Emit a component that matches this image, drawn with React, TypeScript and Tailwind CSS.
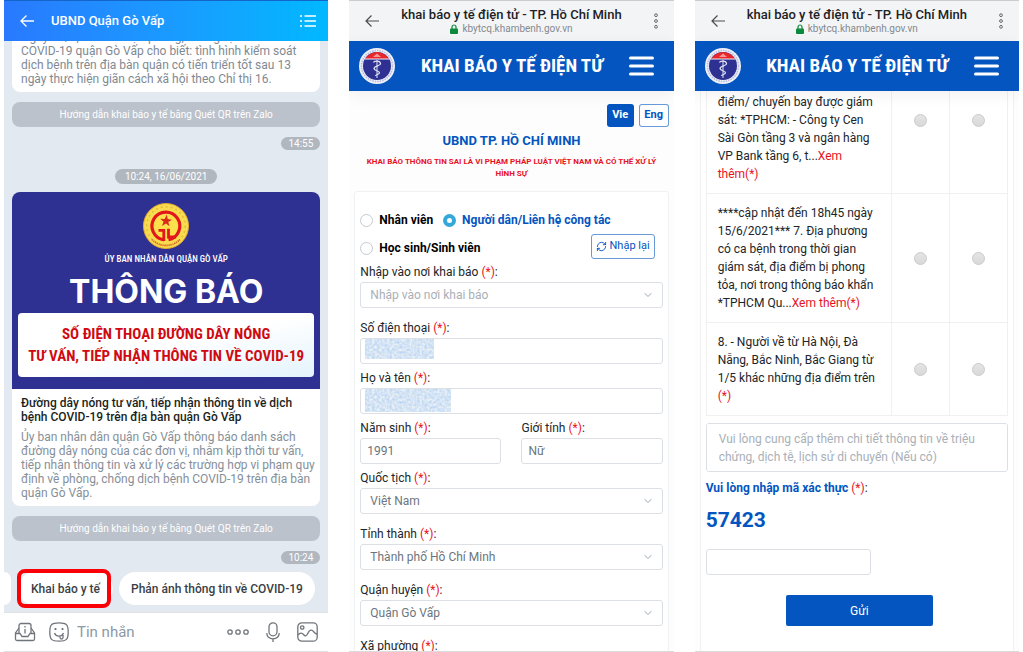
import { useId } from 'react'
import type { ReactNode } from 'react'
import { ChevronDown, RefreshCw } from 'lucide-react'

const condensed = "font-['Roboto_Condensed','Roboto',sans-serif]"

function Required() {
  return <span className="text-[#e8121d]">(*)</span>
}

function Emblem() {
  return (
    <svg viewBox="0 0 46 46" className="size-[46px]" aria-hidden="true">
      <circle cx="23" cy="23" r="22.5" fill="#f8dc50" stroke="#e3ab2f" />
      <circle cx="23" cy="23" r="19.3" fill="none" stroke="#e6b93a" strokeWidth="1.5" strokeDasharray="2 3" />
      <path d="M9 36.5A19.3 19.3 0 0 0 37 36.5" fill="none" stroke="#d8652b" strokeWidth="1.8" strokeDasharray="1.2 .8" />
      <circle cx="23" cy="23" r="16" fill="#fbe04c" />
      <path d="M20.8 36.8A13.9 13.9 0 1 1 25.5 36.7" fill="none" stroke="#e3161c" strokeWidth="3.2" />
      <path d="M15.5 27.3H20.8V38M25.5 25.8V34H33" fill="none" stroke="#e3161c" strokeWidth="2.8" />
      <path
        d="M23.8 11.5L24.7 16L29 16.8L25.3 19L26.5 23.3L23 20.5L19 23L20.6 18.7L17.2 15.8L21.7 15.9Z"
        fill="#d9291c"
      />
    </svg>
  )
}

function HealthLogo() {
  return (
    <svg viewBox="0 0 36 36" className="size-9 shrink-0" aria-hidden="true">
      <circle cx="18" cy="18" r="18" fill="#eef0f8" />
      <circle cx="18" cy="18" r="15.5" fill="none" stroke="#b7bcdd" strokeWidth="1.6" strokeDasharray="1.5 1" />
      <circle cx="18" cy="18" r="14" fill="#2e3192" />
      <path d="M5.9 11A14 14 0 0 1 30.1 11Z" fill="#e8262c" />
      <path d="M14 9L18 5.5L22 9Z" fill="#f39a92" />
      <path d="M5.8 11H30.2" stroke="#eef0f8" strokeWidth="1" />
      <path d="M18 12V30" stroke="#dfe1f2" strokeWidth="1" />
      <path
        d="M14.5 14.5C15 12.5 21 12.5 21.5 15.5C22 18 15 17.5 15 20.5C15 23 20.500 22.500 20.500 24.800C20.500 26.500 16.500 26.500 16.500 28"
        fill="none"
        stroke="#dfe1f2"
        strokeWidth="1.3"
      />
    </svg>
  )
}

// Obscured personal data shown on top of an input
function Redacted({ className }: { className: string }) {
  const id = useId()
  return (
    <svg className={`pointer-events-none absolute top-px left-[5px] ${className}`} aria-hidden="true">
      <filter id={id} x="0" y="0" width="100%" height="100%" colorInterpolationFilters="sRGB">
        <feTurbulence type="fractalNoise" baseFrequency="0.4" numOctaves="2" seed="4" />
        <feColorMatrix values="0.35 0 0 0 0.66  0.2 0.05 0 0 0.77  0 0 0.1 0 0.91  0 0 0 0 1" />
      </filter>
      <rect width="100%" height="100%" fill="#cfe2f6" filter={`url(#${id})`} />
    </svg>
  )
}

function HelpBar() {
  return (
    <button className="mt-[10px] h-[25px] w-full shrink-0 rounded-lg bg-[#bbc2cb] text-[10px] text-white">
      Hướng dẫn khai báo y tế bằng Quét QR trên Zalo
    </button>
  )
}

function TimeTag({ children }: { children: ReactNode }) {
  return (
    <time className="mt-[10px] h-[13px] shrink-0 self-end rounded-full bg-[#b1b7bf] px-[7px] text-[10px] leading-[13px] text-white">
      {children}
    </time>
  )
}

function Composer() {
  return (
    <footer className="flex h-10 shrink-0 items-center border-t border-b border-[#dfe1e5] bg-white px-[10px] text-[#70757c]">
      <button aria-label="Menu">
        <svg viewBox="0 0 22 20" className="h-5 w-[22px]" fill="none" stroke="currentColor" strokeWidth="1.3">
          <path d="M5 11V3.5a2 2 0 0 1 2-2h8a2 2 0 0 1 2 2V11" />
          <path d="M5 6L1.5 11v6a1.5 1.5 0 0 0 1.5 1.5h16a1.5 1.5 0 0 0 1.5-1.5v-6L17 6" />
          <path d="M1.5 11.5H6l2 3h6l2-3h4.5M11 7v4.5M11 4v1.5" />
        </svg>
      </button>
      <button aria-label="Biểu cảm" className="ml-[13px]">
        <svg viewBox="0 0 20 20" className="size-5" fill="none" stroke="currentColor" strokeWidth="1.3">
          <path d="M10 .8c7.5 0 9.2 1.7 9.2 9.2s-1.7 9.2-9.2 9.2S.8 17.5.8 10 2.5.8 10 .8Z" />
          <path d="M5.5 11c1.5 4.2 7.5 4.2 9 0M11 13.8v1.7a1.5 1.5 0 0 0 3 0v-2.5" />
          <path d="M6.5 6v2M13.5 6v2" strokeWidth="1.8" />
        </svg>
      </button>
      <input
        aria-label="Tin nhắn"
        placeholder="Tin nhắn"
        className="ml-2 min-w-0 flex-1 text-[15px] outline-none placeholder:text-[#8d99a6]"
      />
      <button aria-label="Thêm">
        <svg viewBox="0 0 22 6" className="h-[6px] w-[22px]" fill="none" stroke="currentColor" strokeWidth="1.3">
          <circle cx="3" cy="3" r="2.2" />
          <circle cx="11" cy="3" r="2.2" />
          <circle cx="19" cy="3" r="2.2" />
        </svg>
      </button>
      <button aria-label="Ghi âm" className="ml-[17px]">
        <svg viewBox="0 0 14 20" className="h-5 w-[14px]" fill="none" stroke="currentColor" strokeWidth="1.3">
          <rect x="3" y=".8" width="8" height="13" rx="4" />
          <path d="M.8 11c0 3.5 2.500 5.800 6.200 5.800s6.200-2.300 6.200-5.800M7 17v3" />
        </svg>
      </button>
      <button aria-label="Hình ảnh" className="ml-[17px]">
        <svg viewBox="0 0 21 20" className="h-5 w-[21px]" fill="none" stroke="currentColor" strokeWidth="1.3">
          <rect x=".8" y=".8" width="19.4" height="18.4" rx="4" />
          <circle cx="5.2" cy="5.5" r="1.7" />
          <path d="M1 13c2-2.5 4-2.5 5.5-.5s3 2 4.500-1.500 4-3.500 5.500-1.500 2 2.500 3.500 2.500" />
        </svg>
      </button>
    </footer>
  )
}

function ChatPanel() {
  return (
    <section className="flex min-w-0 flex-1 flex-col overflow-hidden bg-[#e2e9f1]">
      <header className="flex h-[41px] shrink-0 items-center border-t border-[#1565c8] bg-linear-to-r from-[#2979ff] to-[#00b8ff] px-4 text-white">
        <button aria-label="Quay lại">
          <svg viewBox="0 0 14 12" className="h-3 w-[14px]" fill="none" stroke="currentColor" strokeWidth="1.3">
            <path d="M6.5.5L1 6l5.5 5.5M1 6h13" />
          </svg>
        </button>
        <h1 className="ml-[17px] flex-1 text-[13px] font-medium">UBND Quận Gò Vấp</h1>
        <button aria-label="Danh mục" className="-mr-1">
          <svg viewBox="0 0 16 12" className="h-3 w-4" stroke="currentColor" strokeWidth="1.4">
            <path d="M0 1h2M0 6h2M0 11h2M4.5 1H16M4.5 6H16M4.5 11H16" />
          </svg>
        </button>
      </header>

      <div className="flex min-h-0 flex-1 flex-col justify-end overflow-hidden px-2 pb-[7px]">
        <article className="shrink-0 rounded-b-lg bg-white px-[9px] pb-[6px] text-[12px] leading-[14px] whitespace-pre text-[#7f8a93]">
          {'Ngày 15/6, Ban chỉ đạo phòng, chống dịch\nCOVID-19 quận Gò Vấp cho biết: tình hình kiểm soát\ndịch bệnh trên địa bàn quận có tiến triển tốt sau 13\nngày thực hiện giãn cách xã hội theo Chỉ thị 16.'}
        </article>
        <HelpBar />
        <TimeTag>14:55</TimeTag>
        <time className="mt-[19px] h-[15px] shrink-0 self-center rounded-full bg-[#b1b7bf] px-[10px] text-[10px] leading-[15px] text-white">
          10:24, 16/06/2021
        </time>

        <article className="mt-2 shrink-0 overflow-hidden rounded-lg bg-white">
          <div className={`flex h-[197px] flex-col items-center bg-[#2f3192] px-[6px] pt-[11px] text-white ${condensed}`}>
            <Emblem />
            <p className="mt-[3px] text-[9px] leading-[14px] font-medium">ỦY BAN NHÂN DÂN QUẬN GÒ VẤP</p>
            <h2 className="mt-2 font-['Inter',sans-serif] text-[32px] leading-[36px] font-bold">THÔNG BÁO</h2>
            <div className="mt-[3px] flex h-16 w-full flex-col justify-center rounded-[4px] bg-linear-to-br from-white via-white to-[#e3f3fc] text-center text-[15px] leading-[22px] font-bold whitespace-nowrap text-[#cf0a11]">
              <p>SỐ ĐIỆN THOẠI ĐƯỜNG DÂY NÓNG</p>
              <p>TƯ VẤN, TIẾP NHẬN THÔNG TIN VỀ COVID-19</p>
            </div>
          </div>
          <div className="px-[9px] pt-[7px] pb-[6px] text-[12px] leading-[14px] whitespace-pre">
            <h3 className="font-medium text-[#1c1f22]">
              {'Đường dây nóng tư vấn, tiếp nhận thông tin về dịch\nbệnh COVID-19 trên địa bàn quận Gò Vấp'}
            </h3>
            <p className="mt-[6px] text-[#868f98]">
              {'Ủy ban nhân dân quận Gò Vấp thông báo danh sách\nđường dây nóng của các đơn vị, nhằm kịp thời tư vấn,\ntiếp nhận thông tin và xử lý các trường hợp vi phạm quy\nđịnh về phòng, chống dịch bệnh COVID-19 trên địa bàn\nquận Gò Vấp.'}
            </p>
          </div>
        </article>
        <HelpBar />
        <TimeTag>10:24</TimeTag>

        <div className="-mx-2 mt-2 flex h-[33px] shrink-0 text-[12px] font-medium text-[#3a3f45]">
          <span className="w-[7px] rounded-r-full bg-white" />
          <div className="relative ml-[7px] flex">
            <button className="rounded-full bg-white px-[13px]">Khai báo y tế</button>
            <span className="pointer-events-none absolute -inset-y-[3px] right-[2px] -left-px rounded-lg border-4 border-[#fb0007]" />
          </div>
          <button className="ml-[6px] rounded-full bg-white px-3">Phản ánh thông tin về COVID-19</button>
        </div>
      </div>
      <Composer />
    </section>
  )
}

function BrowserPanel({ children }: { children: ReactNode }) {
  return (
    <section className="flex min-w-0 flex-1 flex-col overflow-hidden border-b border-[#dcdcdc] bg-[#fdfdfd]">
      <header className="flex h-[41px] shrink-0 items-center border-t border-[#cbcccd] bg-[#f3f4f6] px-4">
        <button aria-label="Quay lại" className="text-[#4a4d50]">
          <svg viewBox="0 0 14 12" className="h-3 w-[14px]" fill="none" stroke="currentColor" strokeWidth="1.2">
            <path d="M6.5.5L1 6l5.5 5.5M1 6h13" />
          </svg>
        </button>
        <div className="flex-1 text-center">
          <h1 className="text-[13px] leading-4 font-medium text-[#202124]">khai báo y tế điện tử - TP. Hồ Chí Minh</h1>
          <p className="flex items-center justify-center gap-1 text-[10px] leading-3 text-[#85898e]">
            <svg viewBox="0 0 8 10" className="h-[10px] w-2" aria-hidden="true">
              <path d="M2 5V3a2 2 0 0 1 4 0v2" fill="none" stroke="#0b8a3c" strokeWidth="1.2" />
              <rect y="4.5" width="8" height="5.5" rx="1" fill="#0b8a3c" />
            </svg>
            kbytcq.khambenh.gov.vn
          </p>
        </div>
        <button aria-label="Tùy chọn" className="flex w-[14px] justify-end text-[#65686b]">
          <svg viewBox="0 0 4 16" className="h-4 w-1" fill="none" stroke="currentColor" strokeWidth="1">
            <circle cx="2" cy="2.2" r="1.4" />
            <circle cx="2" cy="8" r="1.4" />
            <circle cx="2" cy="13.8" r="1.4" />
          </svg>
        </button>
      </header>
      <div className="z-10 flex h-[50px] shrink-0 items-center bg-[#0455bf] px-[10px] text-white shadow-[0_4px_16px_rgba(0,0,0,0.06)]">
        <HealthLogo />
        <p className={`flex-1 text-center text-[19px] font-bold ${condensed}`}>KHAI BÁO Y TẾ ĐIỆN TỬ</p>
        <button aria-label="Mở menu" className="mr-[10px]">
          <svg viewBox="0 0 25 20" className="h-5 w-[25px]" stroke="currentColor" strokeWidth="3" strokeLinecap="round">
            <path d="M1.5 2h22M1.5 10h22M1.5 18h22" />
          </svg>
        </button>
      </div>
      {children}
    </section>
  )
}

const fieldClass = 'h-[26px] w-full rounded-[3px] border border-[#dcdfe3] bg-white text-[12px] text-[#6c757d] outline-none'

function Label({ htmlFor, children }: { htmlFor: string; children: ReactNode }) {
  return (
    <label htmlFor={htmlFor} className="block h-5 text-[12px] leading-5 text-[#212529]">
      {children} <Required />:
    </label>
  )
}

function SelectField({ id, label, value, muted }: { id: string; label: string; value: string; muted?: boolean }) {
  return (
    <div className="mb-[10px]">
      <Label htmlFor={id}>{label}</Label>
      <div className="relative">
        <select id={id} className={`${fieldClass} appearance-none px-[9px] ${muted ? 'text-[#a9b0b7]' : ''}`}>
          <option>{value}</option>
        </select>
        <ChevronDown className="pointer-events-none absolute top-[7px] right-[9px] size-3 text-[#9aa5b1]" />
      </div>
    </div>
  )
}

function RadioOption({ label, checked }: { label: string; checked?: boolean }) {
  return (
    <label className={`flex items-center gap-[6px] text-[12px] font-bold ${checked ? 'text-[#0455bf]' : 'text-black'}`}>
      <input
        type="radio"
        name="group"
        defaultChecked={checked}
        className="size-[13px] appearance-none rounded-full border border-[#c6cbd0] bg-white checked:border-4 checked:border-[#34a8da]"
      />
      {label}
    </label>
  )
}

function FormPanel() {
  return (
    <BrowserPanel>
      <main className="min-h-0 flex-1 overflow-hidden px-[5px] pt-[13px]">
        <div className="flex justify-end gap-[5px] text-[11px] font-bold">
          <button className="h-[23px] w-[27px] rounded-[3px] bg-[#0455bf] text-white">Vie</button>
          <button className="h-[23px] w-[30px] rounded-[3px] border border-[#0455bf]/60 bg-white text-[#0455bf]">Eng</button>
        </div>
        <h2 className="mt-[5px] text-center text-[13px] leading-[18px] font-bold text-[#0455bf]">UBND TP. HỒ CHÍ MINH</h2>
        <p className="mt-[6px] text-center text-[8px] leading-3 font-bold whitespace-pre-line text-[#e8121d]">
          {'KHAI BÁO THÔNG TIN SAI LÀ VI PHẠM PHÁP LUẬT VIỆT NAM VÀ CÓ THỂ XỬ LÝ\nHÌNH SỰ'}
        </p>

        <form className="mt-[11px] rounded-[3px] border border-[#f0f1f2] bg-white px-[5px] pt-[14px]">
          <div className="flex h-7 items-center gap-[10px]">
            <RadioOption label="Nhân viên" />
            <RadioOption label="Người dân/Liên hệ công tác" checked />
          </div>
          <div className="flex h-7 items-center justify-between">
            <RadioOption label="Học sinh/Sinh viên" />
            <button
              type="button"
              className="mr-2 flex h-[25px] items-center gap-[3px] self-start rounded-[3px] border border-[#0455bf]/60 px-1 text-[11px] text-[#0455bf]"
            >
              <RefreshCw className="size-[11px]" />
              Nhập lại
            </button>
          </div>

          <SelectField id="place" label="Nhập vào nơi khai báo" value="Nhập vào nơi khai báo" muted />
          <div className="mb-1">
            <Label htmlFor="phone">Số điện thoại</Label>
            <div className="relative">
              <input id="phone" className={`${fieldClass} px-[7px]`} />
              <Redacted className="h-5 w-[69px]" />
            </div>
          </div>
          <div className="mb-1">
            <Label htmlFor="name">Họ và tên</Label>
            <div className="relative">
              <input id="name" className={`${fieldClass} px-[7px]`} />
              <Redacted className="h-[23px] w-[86px]" />
            </div>
          </div>
          <div className="mb-1 grid grid-cols-2 gap-5">
            <div>
              <Label htmlFor="year">Năm sinh</Label>
              <input id="year" defaultValue="1991" className={`${fieldClass} px-[6px]`} />
            </div>
            <div>
              <Label htmlFor="gender">Giới tính</Label>
              <input id="gender" defaultValue="Nữ" className={`${fieldClass} px-[6px]`} />
            </div>
          </div>
          <SelectField id="nation" label="Quốc tịch" value="Việt Nam" />
          <SelectField id="city" label="Tỉnh thành" value="Thành phố Hồ Chí Minh" />
          <SelectField id="district" label="Quận huyện" value="Quận Gò Vấp" />
          <SelectField id="ward" label="Xã phường" value="" />
        </form>
      </main>
    </BrowserPanel>
  )
}

const questions = [
  {
    text: 'điểm/ chuyến bay được giám\nsát: *TPHCM: - Công ty Cen\nSài Gòn tầng 3 và ngân hàng\nVP Bank tầng 6, t...',
    more: 'Xem\nthêm(*)',
    height: 'h-[147px]',
  },
  {
    text: '****cập nhật đến 18h45 ngày\n15/6/2021*** 7. Địa phương\ncó ca bệnh trong thời gian\ngiám sát, địa điểm bị phong\ntỏa, nơi trong thông báo khẩn\n*TPHCM Qu...',
    more: 'Xem thêm(*)',
  },
  {
    text: '8. - Người về từ Hà Nội, Đà\nNẵng, Bắc Ninh, Bắc Giang từ\n1/5 khác những địa điểm trên\n',
    more: '(*)',
  },
]

const cellClass = 'border border-[#f0f0f0]'

function SubmitPanel() {
  return (
    <BrowserPanel>
      <main className="flex min-h-0 flex-1 flex-col justify-end overflow-hidden px-[5px]">
        <form className="flex shrink-0 flex-col border-x border-[#f0f1f2] bg-white px-[5px] pb-[25px]">
          <table className="w-full border-collapse text-[12px] leading-[18px] text-[#212529]">
            <tbody>
              {questions.map((q, i) => (
                <tr key={i} className={q.height}>
                  <td className={`${cellClass} px-[11px] py-[10px] align-bottom whitespace-pre-line`}>
                    {q.text}
                    <span className="text-[#e8121d]">{q.more}</span>
                  </td>
                  {['Có', 'Không'].map((answer) => (
                    <td key={answer} className={`${cellClass} w-[58px] text-center`}>
                      <input
                        type="radio"
                        name={`question-${i}`}
                        aria-label={answer}
                        className="size-[13px] appearance-none rounded-full border border-[#cbcbcb] bg-linear-to-b from-[#e4e4e4] to-[#d9d9d9] align-middle"
                      />
                    </td>
                  ))}
                </tr>
              ))}
            </tbody>
          </table>
          <textarea
            aria-label="Chi tiết"
            rows={2}
            placeholder="Vui lòng cung cấp thêm chi tiết thông tin về triệu chứng, dịch tễ, lịch sử di chuyển (Nếu có)"
            className="mt-[7px] h-[49px] w-full resize-none rounded-[3px] border border-[#dcdfe3] bg-white px-3 py-[6px] text-[12px] leading-[18px] outline-none placeholder:text-[#a9b0b7]"
          />
          <label htmlFor="captcha" className="mt-[6px] text-[12px] leading-5 text-[#212529]">
            <span className="font-bold text-[#0455bf]">Vui lòng nhập mã xác thực</span> <Required />:
          </label>
          <p className="mt-[9px] text-[21px] leading-[26px] font-bold text-[#0455bf]">57423</p>
          <input
            id="captcha"
            className="mt-4 h-[26px] w-[165px] rounded-[3px] border border-[#dcdfe3] bg-white px-2 text-[12px] outline-none"
          />
          <button type="button" className="mt-5 ml-[5px] h-[31px] w-[147px] self-center rounded-[2px] bg-[#0455bf] text-[12px] text-white">
            Gửi
          </button>
        </form>
      </main>
    </BrowserPanel>
  )
}

export default function App() {
  return (
    <div className="flex h-screen gap-[21px] overflow-hidden bg-white px-1 font-['Roboto',sans-serif]">
      <ChatPanel />
      <FormPanel />
      <SubmitPanel />
    </div>
  )
}
